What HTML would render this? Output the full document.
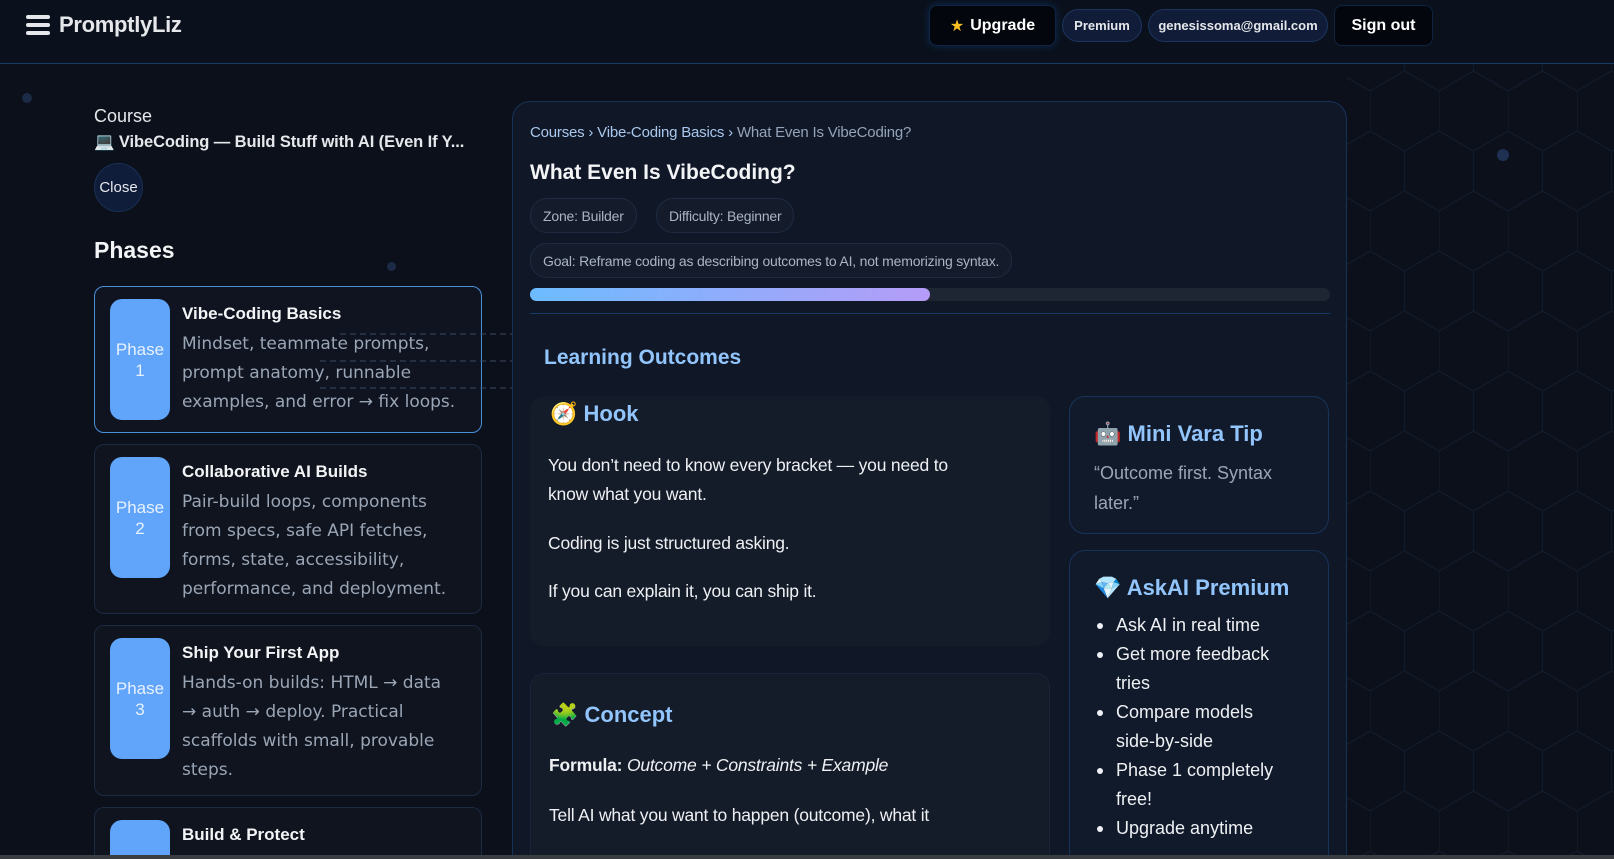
<!DOCTYPE html>
<html><head><meta charset="utf-8">
<style>
*{box-sizing:border-box;margin:0;padding:0}
html{width:1614px;height:859px;overflow:hidden}
body{width:1614px;height:859px;overflow:hidden;background:#0b101a;font-family:"Liberation Sans","DejaVu Sans",sans-serif;color:#e5e7eb;position:relative}
.hdr{position:absolute;left:0;top:0;width:1614px;height:64px;background:#0b111c;border-bottom:1px solid #173a66}
.burger{position:absolute;left:26px;top:15px;width:24px}
.burger i{display:block;height:4px;background:#e5e7eb;border-radius:2px;margin-bottom:4px}
.logo{position:absolute;left:59px;top:12px;font-size:22px;color:#e5e7eb;font-weight:bold;letter-spacing:-0.3px}
.btn{position:absolute;top:5px;height:41px;border-radius:8px;background:#03060d;border:1px solid #0f2440;color:#fff;font-weight:bold;font-size:16px;display:flex;align-items:center;justify-content:center}
.pill{position:absolute;top:9px;height:33px;border-radius:17px;background:#111d38;border:1px solid #1c3560;color:#e5e7eb;font-size:13px;font-weight:bold;display:flex;align-items:center;justify-content:center}
.side{position:absolute;left:94px}
.pc{position:absolute;left:94px;width:388px;border:1px solid #1c2a44;border-radius:10px;background:#0f141e;overflow:hidden}
.pc.act{border-color:#4a90d9;background:#0f1420}
.badge{position:absolute;left:15px;width:60px;background:#60a5fa;border-radius:12px;color:#e8f1ff;font-size:17px;text-align:center;display:flex;align-items:center;justify-content:center;line-height:21px}
.pt{position:absolute;left:87px;font-size:17px;font-weight:bold;color:#f3f4f6}
.pd{position:absolute;left:87px;line-height:29px;color:#9aa5b6;width:285px;font-family:"DejaVu Sans",sans-serif;font-size:17px}
.main{position:absolute;left:512px;top:101px;width:835px;height:758px;background:#101828;border:1px solid #173259;border-bottom:none;border-radius:18px 18px 0 0}
.chip{position:absolute;height:35px;border-radius:17px;background:#141c2b;border:1px solid #1e2b40;color:#aab4c4;font-size:14px;display:flex;align-items:center;padding:0 12px;letter-spacing:-0.2px}
.card{position:absolute;background:#141b29;border-radius:14px}
.rc{position:absolute;left:1069px;width:260px;background:#111a2b;border:1px solid #18335a;border-radius:16px}
h3{font-size:22px;color:#93c5fd;font-weight:bold}
.p{font-size:17.5px;color:#eef0f3;line-height:29px;letter-spacing:-0.2px}
ul{list-style:none}
ul li{position:relative;padding-left:22px;font-size:18px;line-height:29px;color:#eef0f3}
ul li:before{content:"";position:absolute;left:3px;top:12px;width:6px;height:6px;border-radius:3px;background:#eef0f3}
</style></head><body>
<svg style="position:absolute;left:1347px;top:64px" width="267" height="795">
<defs><pattern id="hx" width="69" height="120" patternUnits="userSpaceOnUse" x="23" y="-3">
<path d="M0 30 L34.5 10 L69 30 M0 30 V70 M0 70 L34.5 90 L69 70 M34.5 90 V130 M34.5 10 V-30" stroke="#121b2c" stroke-width="1.2" fill="none"/></pattern></defs>
<rect width="267" height="795" fill="url(#hx)"/></svg>
<div style="position:absolute;left:1497px;top:149px;width:12px;height:12px;border-radius:6px;background:#1e3152"></div>
<div style="position:absolute;left:22px;top:93px;width:10px;height:10px;border-radius:5px;background:#1b2a45"></div>
<div style="position:absolute;left:387px;top:262px;width:9px;height:9px;border-radius:5px;background:#1b2a45"></div>

<div class="hdr">
<div class="burger"><i></i><i></i><i style="margin:0"></i></div>
<div class="logo">PromptlyLiz</div>
<div class="btn" style="left:929px;width:127px;box-shadow:0 0 8px #0d2a55"><span style="color:#fbbf24;margin-right:6px">★</span>Upgrade</div>
<div class="pill" style="left:1062px;width:80px">Premium</div>
<div class="pill" style="left:1148px;width:180px">genesissoma@gmail.com</div>
<div class="btn" style="left:1334px;width:99px">Sign out</div>
</div>

<div class="side" style="top:106px;font-size:18px;color:#e5e7eb">Course</div>
<div class="side" style="top:133px;font-size:16.5px;font-weight:bold;color:#e5e7eb;white-space:nowrap;letter-spacing:-0.1px">💻 VibeCoding — Build Stuff with AI (Even If Y...</div>
<div class="side" style="top:163px;width:49px;height:49px;border-radius:25px;background:#0f1d3a;border:1px solid #1a2f55;font-size:15px;display:flex;align-items:center;justify-content:center;color:#e5e7eb">Close</div>
<div class="side" style="top:237px;font-size:23px;font-weight:bold;color:#f3f4f6">Phases</div>

<div class="pc act" style="top:286px;height:147px"><div class="badge" style="top:12px;height:121px">Phase<br>1</div><div class="pt" style="top:17px">Vibe-Coding Basics</div><div class="pd" style="top:43px">Mindset, teammate prompts, prompt anatomy, runnable examples, and error → fix loops.</div></div>
<div class="pc" style="top:444px;height:170px"><div class="badge" style="top:12px;height:121px">Phase<br>2</div><div class="pt" style="top:17px">Collaborative AI Builds</div><div class="pd" style="top:43px;width:275px">Pair-build loops, components from specs, safe API fetches, forms, state, accessibility, performance, and deployment.</div></div>
<div class="pc" style="top:625px;height:171px"><div class="badge" style="top:12px;height:121px">Phase<br>3</div><div class="pt" style="top:17px">Ship Your First App</div><div class="pd" style="top:43px;width:275px">Hands-on builds: HTML → data → auth → deploy. Practical scaffolds with small, provable steps.</div></div>
<div class="pc" style="top:807px;height:52px;border-bottom:none;border-radius:10px 10px 0 0"><div class="badge" style="top:12px;height:121px"></div><div class="pt" style="top:17px">Build &amp; Protect</div></div>
<svg style="position:absolute;left:320px;top:330px" width="192" height="60"><g stroke="#3b4a63" stroke-dasharray="6 4"><line x1="20" y1="4" x2="192" y2="4"/><line x1="0" y1="31" x2="192" y2="31"/><line x1="0" y1="58" x2="192" y2="58"/></g></svg>

<div class="main">
<div style="position:absolute;left:17px;top:22px;font-size:15px;color:#a9c7ec;letter-spacing:-0.2px">Courses › Vibe-Coding Basics › <span style="color:#94a3b8">What Even Is VibeCoding?</span></div>
<div style="position:absolute;left:17px;top:59px;font-size:21px;font-weight:bold;color:#f3f4f6">What Even Is VibeCoding?</div>
<div class="chip" style="left:17px;top:96px">Zone: Builder</div>
<div class="chip" style="left:143px;top:96px">Difficulty: Beginner</div>
<div class="chip" style="left:17px;top:141px">Goal: Reframe coding as describing outcomes to AI, not memorizing syntax.</div>
<div style="position:absolute;left:17px;top:186px;width:800px;height:13px;border-radius:7px;background:#1e2533"></div>
<div style="position:absolute;left:17px;top:186px;width:400px;height:13px;border-radius:7px;background:linear-gradient(90deg,#6cbcff,#b59cf8)"></div>
<div style="position:absolute;left:17px;top:211px;width:800px;height:1px;background:#173a66"></div>
<div style="position:absolute;left:31px;top:244px;font-size:21px;font-weight:bold;color:#93c5fd">Learning Outcomes</div>
</div>

<div class="card" style="left:530px;top:396px;width:520px;height:250px">
<h3 style="position:absolute;left:20px;top:5px">🧭 Hook</h3>
<div class="p" style="position:absolute;left:18px;top:55px;width:430px">You don’t need to know every bracket — you need to know what you want.</div>
<div class="p" style="position:absolute;left:18px;top:133px">Coding is just structured asking.</div>
<div class="p" style="position:absolute;left:18px;top:181px">If you can explain it, you can ship it.</div>
</div>
<div class="card" style="left:530px;top:673px;width:520px;height:186px;border:1px solid #1a2436;border-bottom:none;border-radius:14px 14px 0 0">
<h3 style="position:absolute;left:20px;top:28px">🧩 Concept</h3>
<div class="p" style="position:absolute;left:18px;top:77px"><b>Formula:</b> <i>Outcome + Constraints + Example</i></div>
<div class="p" style="position:absolute;left:18px;top:127px">Tell AI what you want to happen (outcome), what it</div>
</div>

<div class="rc" style="top:396px;height:138px">
<h3 style="position:absolute;left:24px;top:24px">🤖 Mini Vara Tip</h3>
<div style="position:absolute;left:24px;top:61px;width:200px;font-size:18px;line-height:30px;color:#9aa5b6">“Outcome first. Syntax later.”</div>
</div>
<div class="rc" style="top:550px;height:309px;border-bottom:none;border-radius:16px 16px 0 0;overflow:hidden">
<h3 style="position:absolute;left:24px;top:24px">💎 AskAI Premium</h3>
<ul style="position:absolute;left:24px;top:60px;width:200px">
<li>Ask AI in real time</li><li>Get more feedback tries</li><li>Compare models side-by-side</li><li>Phase 1 completely free!</li><li>Upgrade anytime</li></ul>
</div>
<div style="position:absolute;left:0;top:855px;width:1614px;height:4px;background:#3a3d42"></div>
</body></html>
